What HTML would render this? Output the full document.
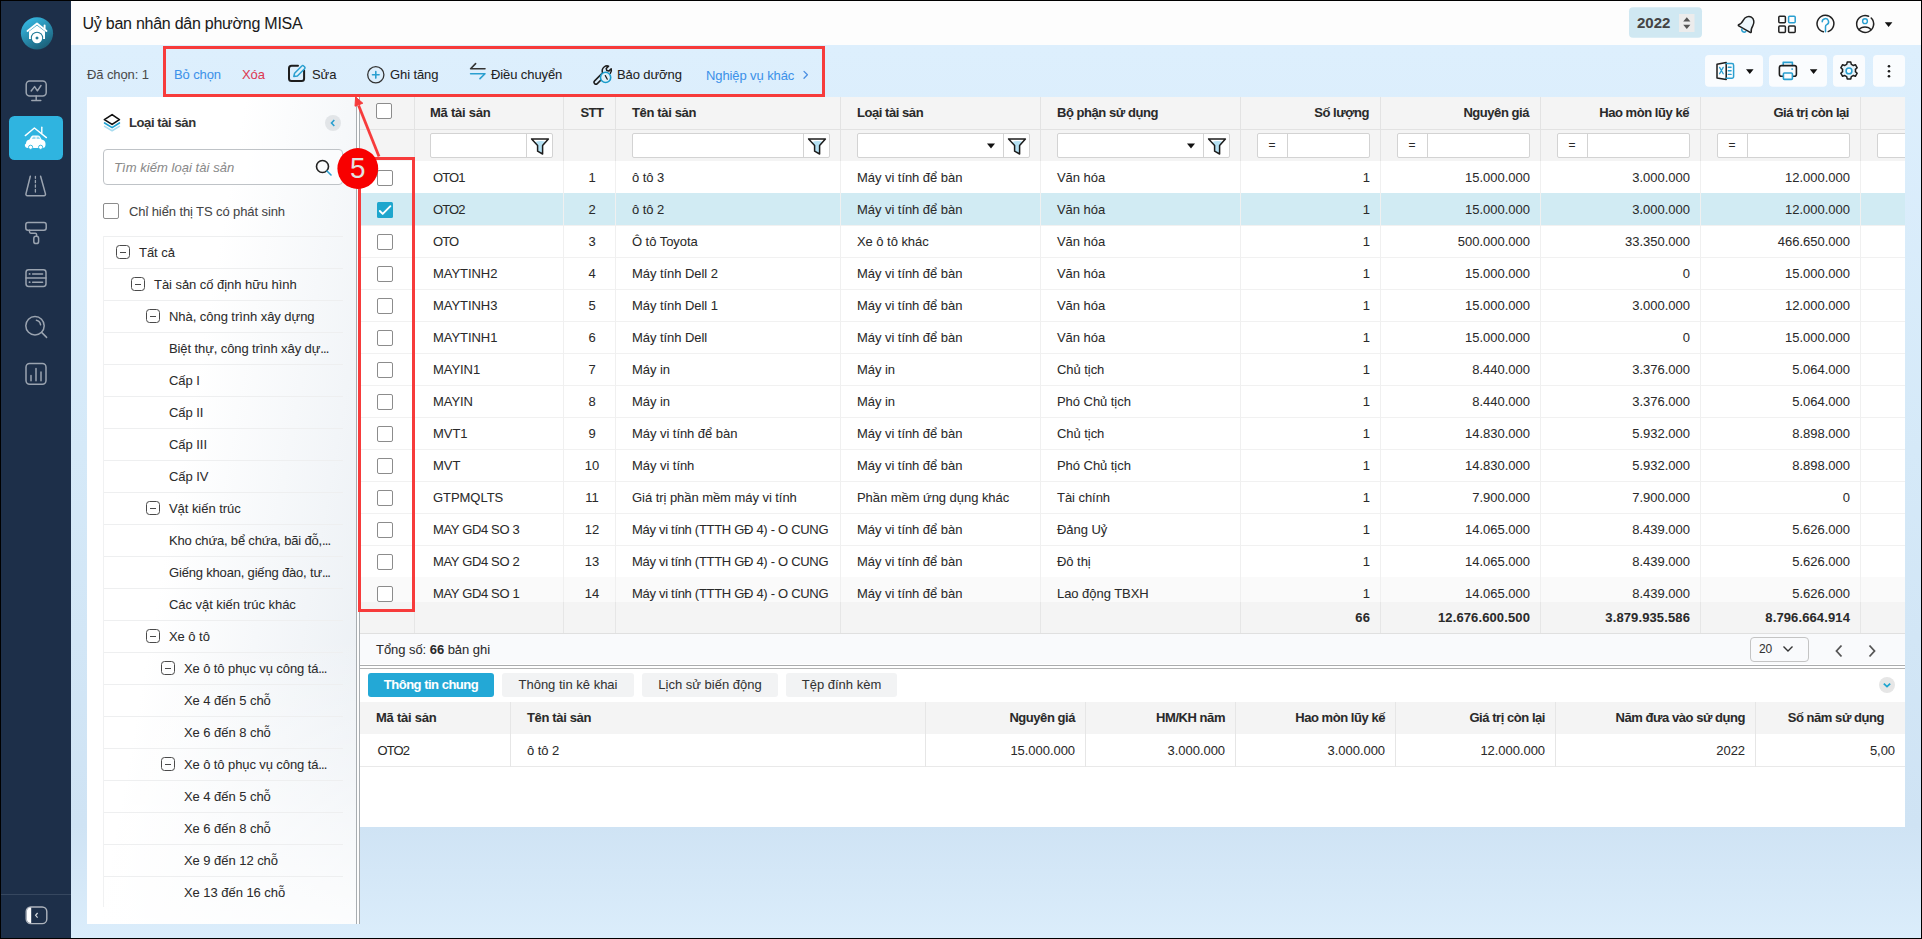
<!DOCTYPE html><html><head><meta charset="utf-8"><style>
*{box-sizing:border-box;margin:0;padding:0}
html,body{width:1922px;height:939px;overflow:hidden;background:#000}
body{position:relative;font-family:"Liberation Sans",sans-serif;color:#2a2a2a;font-size:13px}
.a{position:absolute}
.t{position:absolute;white-space:nowrap;letter-spacing:-0.05px;line-height:16px;-webkit-text-stroke:0.05px currentColor}
#app{position:absolute;left:1px;top:1px;width:1920px;height:937px;overflow:hidden;background:linear-gradient(to bottom,#ddeffd 5%,#d5e9f8 48%,#cfe3f4 88%,#dbedfb 100%)}
#side{position:absolute;left:0;top:0;width:70px;height:937px;background:#1d2f49}
#hdr{position:absolute;left:70px;top:0;width:1850px;height:44px;background:#fdfdfd}
#panel{position:absolute;left:86px;top:96px;width:270px;height:827px;background:linear-gradient(to bottom,rgba(255,255,255,0) 65%,rgba(255,255,255,0.85) 100%),linear-gradient(100deg,#ffffff 38%,#e9eef3 100%)}
#tbl{position:absolute;left:359px;top:96px;width:1545px;height:568px;background:#fff;overflow:hidden}
.cell{position:absolute;top:0;height:32px}
.hd{background:#f4f4f4}
.vl{position:absolute;top:0;width:1px;background:#e6e6e6}
.hl{position:absolute;left:0;height:1px;background:#e9e9e9}
.cb{position:absolute;width:16px;height:16px;border:1px solid #8c8c8c;border-radius:2px;background:#fff}
.inp{position:absolute;height:25px;border:1px solid #d3d3d3;background:#fff;border-radius:2px}
.t.b{font-weight:bold;letter-spacing:-0.45px}
</style></head><body><div id="app">
<div id="side">
<svg class="a" style="left:0;top:0" width="70" height="420" viewBox="1 1 70 420">
<defs><linearGradient id="lg" x1="0.2" y1="0" x2="0.8" y2="1"><stop offset="0" stop-color="#36bbe6"/><stop offset="1" stop-color="#1a5a72"/></linearGradient></defs>
<circle cx="37" cy="33.3" r="16.1" fill="url(#lg)"/>
<path d="M27.5 31 L37 23.5 L46.5 31" fill="none" stroke="#fff" stroke-width="1.9" stroke-linecap="round" stroke-linejoin="round"/>
<path d="M44.6 25.5 v3.5" stroke="#fff" stroke-width="1.9" stroke-linecap="round"/>
<path d="M29 31.5 L37 25.6 L45 31.5 V39 H29z" fill="#fff"/>
<circle cx="37" cy="38" r="6.2" fill="#1f7896"/><circle cx="37" cy="38" r="5.2" fill="#fff"/>
<path d="M37 36.2 L38.8 38 L37 39.8 L35.2 38z" fill="#1f7896"/>

<g fill="none" stroke="#9ba4b0" stroke-width="1.5" stroke-linecap="round" stroke-linejoin="round"><rect x="26.2" y="81" width="20" height="15" rx="3.5"/><path d="M36.2 96v4.2M31.8 100.5h9"/><path d="M31.2 91 L34.6 86.6 L37.4 90.8 L41 85.5"/></g>
<rect x="9" y="116" width="54" height="44" rx="5.5" fill="#2fb4e0"/>
<path d="M25.3 135.6 L34.4 128 L46.4 137.6" fill="none" stroke="#fff" stroke-width="1.4" stroke-linecap="round" stroke-linejoin="round"/>
<path d="M41.8 127.2 v6" stroke="#fff" stroke-width="1.4" stroke-linecap="round"/>
<path d="M26 143.5 c0-2.2 1.3-3.5 3.5-3.9 l1.6-2.8 c.6-.9 1.3-1.2 2.4-1.2 h4.3 c1 0 1.8 .4 2.3 1.2 l1.5 2.8 c2.2 .4 3.9 1.8 3.9 4 v1.2 c0 2-1 3.3-3 3.3 h-14.6 c-1.9 0-3.1-1.3-3.1-3.3z" fill="#fff"/>
<path d="M31.8 139 l1.2-2.3 h2.5 v2.3z M36.6 136.7 h2.3 l1.2 2.3 h-3.5z" fill="#9bdcf1"/>
<circle cx="30.6" cy="147.3" r="2.1" fill="#fff" stroke="#2fb4e0" stroke-width="0.9"/><circle cx="40.6" cy="147.3" r="2.1" fill="#fff" stroke="#2fb4e0" stroke-width="0.9"/>
<g fill="none" stroke="#9ba4b0" stroke-width="1.5" stroke-linecap="round" stroke-linejoin="round"><path d="M30.3 176.2 L26 193.6 c-.3 1.2 .3 2.2 1.4 2.2 H44 c1.1 0 1.7-1 1.4-2.2 L40.6 176.2"/><path d="M35.4 176.5v1.8M35.4 180.5v2.2M35.4 185v2.2M35.4 189.5v2.5" stroke-width="1.3"/></g>
<g fill="none" stroke="#9ba4b0" stroke-width="1.5" stroke-linecap="round" stroke-linejoin="round"><rect x="25.8" y="222.6" width="20.4" height="7.6" rx="2.2"/><path d="M29.5 230.3 v1.5 c0 .9 .5 1.4 1.4 1.4 h4.4 c.9 0 1.3 .5 1.3 1.3 v1.5"/><rect x="33.8" y="236.2" width="4.8" height="7.4" rx="2.2"/></g>
<g fill="none" stroke="#9ba4b0" stroke-width="1.5" stroke-linecap="round" stroke-linejoin="round"><rect x="26" y="269.8" width="20" height="16.6" rx="2.6"/><path d="M26 278h20M32.6 273.9h10M32.6 282.2h10"/><path d="M29.5 273.9h.2M29.5 282.2h.2" stroke-width="1.8"/></g>
<g fill="none" stroke="#9ba4b0" stroke-width="1.5" stroke-linecap="round" stroke-linejoin="round"><circle cx="35" cy="325.8" r="9.2"/><path d="M41.6 332.4 L46.6 337.4"/><path d="M36.4 320.3 a5.6 5.6 0 0 1 4.2 4.5"/></g>
<g fill="none" stroke="#9ba4b0" stroke-width="1.5" stroke-linecap="round" stroke-linejoin="round"><rect x="26" y="363.6" width="20" height="20.6" rx="3.6"/><path d="M31 375.5v5.2M36 368.6v12.1M41 372v8.7"/></g>
</svg>
<div class="a" style="left:0;top:893px;width:70px;height:1px;background:#36475f"></div>
<svg class="a" style="left:23px;top:904px" width="25" height="21" viewBox="0 0 25 21">
<rect x="2.2" y="2" width="20.6" height="16.6" rx="4.6" fill="none" stroke="#aeb4bd" stroke-width="1.4"/><path d="M2.9 6.6 a4 4 0 0 1 4-4 h0.3 v15.4 h-0.3 a4 4 0 0 1 -4-4z" fill="#fff"/>
<path d="M13.6 8 L11.6 10.3 L13.6 12.6" fill="none" stroke="#d5d9de" stroke-width="1.2"/></svg>
</div>
<div id="hdr">
<div class="t" style="left:11.5px;top:14px;font-size:16px;line-height:18px;letter-spacing:-0.25px;color:#1a1a1a">Uỷ ban nhân dân phường MISA</div>
</div>
<svg class="a" style="left:0;top:0" width="1920" height="96" viewBox="1 1 1920 96">
<rect x="1629" y="7.2" width="73" height="30.6" rx="4" fill="#d0e8f2"/>
<rect x="1679" y="14" width="15.5" height="18" fill="#ececec"/>
<path d="M1683.2 21.5 L1686.8 17.3 L1690.4 21.5z M1683.2 24.8 L1686.8 29 L1690.4 24.8z" fill="#555"/>
<g fill="none" stroke-linecap="round" stroke-linejoin="round" stroke-width="1.5">
 <g transform="translate(1.3 0) rotate(30 1746 24)">
  <path d="M1739 28.5 c1.6-1.4 1.6-3.5 1.6-6 c0-3.4 2.3-6.4 5.5-6.4 s5.5 3 5.5 6.4 c0 2.5 0 4.6 1.6 6 c.6.6 .2 1.4-.5 1.4 h-13.2 c-.7 0-1.1-.8-.5-1.4z" stroke="#1f1f1f" fill="#eef7fc"/>
  <path d="M1743.8 31.2 a2.4 2.4 0 0 0 4.6 0" stroke="#2a9fd0"/>
 </g>
 <rect x="1778.8" y="16.2" width="6.6" height="6.6" rx="1" stroke="#222"/>
 <rect x="1788.6" y="16.2" width="6.6" height="6.6" rx="1" stroke="#2a9fd0"/>
 <rect x="1778.8" y="26" width="6.6" height="6.6" rx="1" stroke="#222"/>
 <rect x="1788.6" y="26" width="6.6" height="6.6" rx="1" stroke="#222"/>
 <path d="M1823.4 31.8 A8.4 8.4 0 1 1 1828.2 31.6" stroke="#222"/>
 <path d="M1822.2 21.8 a3.2 3.2 0 1 1 4.6 2.9 c-.9 .45 -1.3 1.2 -1.3 2.1 v5" stroke="#2a9fd0"/>
 <path d="M1868.6 16.2 A8.5 8.5 0 1 0 1871.2 18" stroke="#222"/>
 <circle cx="1865" cy="21.2" r="2.4" stroke="#2a9fd0" stroke-width="1.4"/>
 <path d="M1859 29.6 c2.8-3.6 9.2-3.6 12 0" stroke="#222"/>
</g>
<path d="M1884.8 22.3 h7.6 L1888.6 27z" fill="#111"/>
</svg>
<div class="t b" style="left:1636px;top:14px;font-size:15px;line-height:16px;color:#444;letter-spacing:0">2022</div>
<div class="t" style="left:86px;top:66px;color:#4a4a4a;letter-spacing:-0.1px">Đã chọn: 1</div>
<div class="t" style="left:173px;top:66px;color:#3d92ea;letter-spacing:-0.1px">Bỏ chọn</div>
<div class="t" style="left:241px;top:66px;color:#dc3a52;letter-spacing:-0.1px">Xóa</div>
<div class="t" style="left:311px;top:66px;color:#222;letter-spacing:-0.1px">Sửa</div>
<div class="t" style="left:389px;top:66px;color:#222;letter-spacing:-0.1px">Ghi tăng</div>
<div class="t" style="left:490px;top:66px;color:#222;letter-spacing:-0.1px">Điều chuyển</div>
<div class="t" style="left:616px;top:66px;color:#222;letter-spacing:-0.1px">Bảo dưỡng</div>
<div class="t" style="left:705px;top:67px;color:#3d92ea;letter-spacing:-0.1px">Nghiệp vụ khác</div>
<svg class="a" style="left:0;top:0" width="1920" height="96" viewBox="1 1 1920 96">
<g fill="none" stroke-linecap="round" stroke-linejoin="round">
 <path d="M298 65.8 H291.5 a2.5 2.5 0 0 0 -2.5 2.5 V78.6 a2.5 2.5 0 0 0 2.5 2.5 H301.6 a2.5 2.5 0 0 0 2.5-2.5 V70.5" stroke="#1d1d1d" stroke-width="2"/>
 <path d="M293.8 76.4 L294.6 73.2 L301.8 66 a1.3 1.3 0 0 1 1.9 0 L304.6 66.9 a1.3 1.3 0 0 1 0 1.9 L297.4 76 z" stroke="#2a9fd0" stroke-width="1.5" fill="#e3f2fa"/>
 <circle cx="375.8" cy="74.8" r="8.1" stroke="#333" stroke-width="1.3"/>
 <path d="M375.8 71.5v6.6M372.5 74.8h6.6" stroke="#2a9fd0" stroke-width="1.6"/>
 <path d="M485 68.7 H470.6 L475.6 63.6" stroke="#333" stroke-width="1.6"/>
 <path d="M470.6 73.7 H485 L480 78.6" stroke="#2a9fd0" stroke-width="1.6"/>
 <g transform="translate(0.3 1.6)"><path d="M605 74 L597 82 a1.9 1.9 0 0 1 -2.7 -2.7 L602.3 71.3 c-.8-2.2-.2-4.5 1.5-5.9 c1.3-1 3-1.4 4.5-.9 l-2.4 2.4 l.6 2 l2 .6 l2.4-2.4 c.5 1.5 .1 3.2-.9 4.5" stroke="#1d1d1d" stroke-width="1.5"/></g>
 <circle cx="605.6" cy="77.4" r="5.1" stroke="#1a9ccb" stroke-width="1.6" fill="#dff0f9"/>
 <path d="M605.3 75.6 L607.3 79.2" stroke="#1d1d1d" stroke-width="1.2"/>
 <path d="M804 71.4 L807.4 74.8 L804 78.2" stroke="#4a8fe3" stroke-width="1.3"/>
</g>
<g fill="#fafcfe">
 <rect x="1705" y="55" width="58" height="31.8" rx="4"/><rect x="1769" y="55" width="58" height="31.8" rx="4"/>
 <rect x="1833" y="55" width="32" height="31.8" rx="4"/><rect x="1873" y="55" width="32" height="31.8" rx="4"/>
</g>
<g fill="none" stroke-linejoin="round" stroke-linecap="round">
 <path d="M1717 64.2 L1726.2 62.5 V79.6 L1717 77.9z" stroke="#1d1d1d" stroke-width="1.5"/>
 <path d="M1726.2 63.6 H1732 a1.6 1.6 0 0 1 1.6 1.6 V76.6 a1.6 1.6 0 0 1 -1.6 1.6 H1726.2" stroke="#2a9fd0" stroke-width="1.5"/>
 <path d="M1728.3 67.2h2.8M1728.3 70.8h2.8M1728.3 74.4h2.8" stroke="#2a9fd0" stroke-width="1.4"/>
 <path d="M1719.6 67.4 l3.6 6.4 M1723.2 67.4 l-3.6 6.4" stroke="#2a9fd0" stroke-width="1.3"/>
 <path d="M1783.2 65.5 V62.4 h9.2 v3.1" stroke="#2a9fd0" stroke-width="1.6"/>
 <path d="M1783 76.2 h-1.6 a2 2 0 0 1 -2-2 V67.6 a2 2 0 0 1 2-2 h13 a2 2 0 0 1 2 2 v6.6 a2 2 0 0 1 -2 2 h-1.6" stroke="#1d1d1d" stroke-width="1.6"/>
 <rect x="1783.4" y="73" width="9" height="6.4" rx="1" stroke="#2a9fd0" stroke-width="1.6" fill="#fafcfe"/>
 <path d="M1792 69.1h.3" stroke="#2a9fd0" stroke-width="1.6"/>
</g>
<path d="M1746 69.2 h7.6 L1749.8 74z M1809.8 69.2 h7.6 L1813.6 74z" fill="#111"/>
<g transform="translate(1849 70.9)">
 <path d="M-1.8 -8.8 h3.6 l.5 2.3 a6.6 6.6 0 0 1 1.9 1.1 l2.2-.8 1.8 3.1-1.8 1.6 a6.6 6.6 0 0 1 0 2.2 l1.8 1.6-1.8 3.1-2.2-.8 a6.6 6.6 0 0 1-1.9 1.1 l-.5 2.3 h-3.6 l-.5-2.3 a6.6 6.6 0 0 1-1.9-1.1 l-2.2 .8-1.8-3.1 1.8-1.6 a6.6 6.6 0 0 1 0-2.2 l-1.8-1.6 1.8-3.1 2.2 .8 a6.6 6.6 0 0 1 1.9-1.1z" fill="#e8f4fa" stroke="#1d1d1d" stroke-width="1.5" stroke-linejoin="round"/>
 <circle r="2.9" fill="#fff" stroke="#2a9fd0" stroke-width="1.5"/>
</g>
<circle cx="1889" cy="66.2" r="1.3" fill="#1d1d1d"/><circle cx="1889" cy="71.2" r="1.3" fill="#1d1d1d"/><circle cx="1889" cy="76.2" r="1.3" fill="#1d1d1d"/>
</svg>
<div id="panel">
<svg class="a" style="left:0;top:0" width="270" height="60" viewBox="87 97 270 60" fill="none" stroke-linejoin="round" stroke-linecap="round">
<path d="M104.6 126.4 L112.1 130.8 L119.4 126.4" stroke="#a9dcef" stroke-width="1.6"/>
<path d="M104.6 123 L112.1 127.6 L119.4 123" stroke="#1d9fcf" stroke-width="1.7"/>
<path d="M104.4 119.6 L112.1 114.6 L119.4 119.6 L112.1 124.4z" stroke="#111" stroke-width="1.7" fill="#fff"/>
</svg>
<div class="t b" style="left:42px;top:18px;color:#333;letter-spacing:-0.4px">Loại tài sản</div>
<div class="a" style="left:238px;top:18px;width:16px;height:16px;border-radius:50%;background:#e2e5e8"></div>
<svg class="a" style="left:238px;top:18px" width="16" height="16" viewBox="0 0 16 16"><path d="M9.3 5 L6.5 8 L9.3 11" fill="none" stroke="#2a9fd0" stroke-width="1.6"/></svg>
<div class="a" style="left:16px;top:52px;width:240px;height:36px;border:1px solid #bfc3c7;border-radius:4px;background:rgba(255,255,255,0.5)"></div>
<div class="t" style="left:27px;top:63px;font-style:italic;color:#8a8a8a;letter-spacing:0.05px">Tìm kiếm loại tài sản</div>
<svg class="a" style="left:228px;top:62px" width="18" height="18" viewBox="0 0 18 18" fill="none" stroke-width="1.6" stroke-linecap="round">
<circle cx="7.5" cy="7.5" r="6" stroke="#222"/><path d="M12 12 L16 16" stroke="#2a9fd0"/></svg>
<div class="cb" style="left:16px;top:106px"></div>
<div class="t" style="left:42px;top:107px;color:#444;letter-spacing:-0.1px">Chỉ hiển thị TS có phát sinh</div>
<div class="a" style="left:16px;top:139px;width:240px;height:1px;background:#eeeff0"></div>
<div class="a" style="left:29px;top:148px;width:14px;height:14px;border:1.3px solid #4a4a4a;border-radius:3.5px"></div><div class="a" style="left:33px;top:154.5px;width:6px;height:1.2px;background:#4a4a4a"></div>
<div class="t" style="left:52px;top:148px;color:#2b2b2b;letter-spacing:-0.05px">Tất cả</div>
<div class="a" style="left:16px;top:171px;width:240px;height:1px;background:#eeeff0"></div>
<div class="a" style="left:44px;top:180px;width:14px;height:14px;border:1.3px solid #4a4a4a;border-radius:3.5px"></div><div class="a" style="left:48px;top:186.5px;width:6px;height:1.2px;background:#4a4a4a"></div>
<div class="t" style="left:67px;top:180px;color:#2b2b2b;letter-spacing:-0.05px">Tài sản cố định hữu hình</div>
<div class="a" style="left:16px;top:203px;width:240px;height:1px;background:#eeeff0"></div>
<div class="a" style="left:59px;top:212px;width:14px;height:14px;border:1.3px solid #4a4a4a;border-radius:3.5px"></div><div class="a" style="left:63px;top:218.5px;width:6px;height:1.2px;background:#4a4a4a"></div>
<div class="t" style="left:82px;top:212px;color:#2b2b2b;letter-spacing:-0.05px">Nhà, công trình xây dựng</div>
<div class="a" style="left:16px;top:235px;width:240px;height:1px;background:#eeeff0"></div>
<div class="t" style="left:82px;top:244px;color:#2b2b2b;letter-spacing:-0.1px">Biệt thự, công trình xây dự<span style="letter-spacing:-0.9px">...</span></div>
<div class="a" style="left:16px;top:267px;width:240px;height:1px;background:#eeeff0"></div>
<div class="t" style="left:82px;top:276px;color:#2b2b2b;letter-spacing:-0.05px">Cấp I</div>
<div class="a" style="left:16px;top:299px;width:240px;height:1px;background:#eeeff0"></div>
<div class="t" style="left:82px;top:308px;color:#2b2b2b;letter-spacing:-0.05px">Cấp II</div>
<div class="a" style="left:16px;top:331px;width:240px;height:1px;background:#eeeff0"></div>
<div class="t" style="left:82px;top:340px;color:#2b2b2b;letter-spacing:-0.05px">Cấp III</div>
<div class="a" style="left:16px;top:363px;width:240px;height:1px;background:#eeeff0"></div>
<div class="t" style="left:82px;top:372px;color:#2b2b2b;letter-spacing:-0.05px">Cấp IV</div>
<div class="a" style="left:16px;top:395px;width:240px;height:1px;background:#eeeff0"></div>
<div class="a" style="left:59px;top:404px;width:14px;height:14px;border:1.3px solid #4a4a4a;border-radius:3.5px"></div><div class="a" style="left:63px;top:410.5px;width:6px;height:1.2px;background:#4a4a4a"></div>
<div class="t" style="left:82px;top:404px;color:#2b2b2b;letter-spacing:-0.05px">Vật kiến trúc</div>
<div class="a" style="left:16px;top:427px;width:240px;height:1px;background:#eeeff0"></div>
<div class="t" style="left:82px;top:436px;color:#2b2b2b;letter-spacing:-0.18px">Kho chứa, bể chứa, bãi đỗ,<span style="letter-spacing:-0.9px">...</span></div>
<div class="a" style="left:16px;top:459px;width:240px;height:1px;background:#eeeff0"></div>
<div class="t" style="left:82px;top:468px;color:#2b2b2b;letter-spacing:-0.18px">Giếng khoan, giếng đào, tư<span style="letter-spacing:-0.9px">...</span></div>
<div class="a" style="left:16px;top:491px;width:240px;height:1px;background:#eeeff0"></div>
<div class="t" style="left:82px;top:500px;color:#2b2b2b;letter-spacing:-0.05px">Các vật kiến trúc khác</div>
<div class="a" style="left:16px;top:523px;width:240px;height:1px;background:#eeeff0"></div>
<div class="a" style="left:59px;top:532px;width:14px;height:14px;border:1.3px solid #4a4a4a;border-radius:3.5px"></div><div class="a" style="left:63px;top:538.5px;width:6px;height:1.2px;background:#4a4a4a"></div>
<div class="t" style="left:82px;top:532px;color:#2b2b2b;letter-spacing:-0.05px">Xe ô tô</div>
<div class="a" style="left:16px;top:555px;width:240px;height:1px;background:#eeeff0"></div>
<div class="a" style="left:74px;top:564px;width:14px;height:14px;border:1.3px solid #4a4a4a;border-radius:3.5px"></div><div class="a" style="left:78px;top:570.5px;width:6px;height:1.2px;background:#4a4a4a"></div>
<div class="t" style="left:97px;top:564px;color:#2b2b2b;letter-spacing:-0.1px">Xe ô tô phục vụ công tá<span style="letter-spacing:-0.9px">...</span></div>
<div class="a" style="left:16px;top:587px;width:240px;height:1px;background:#eeeff0"></div>
<div class="t" style="left:97px;top:596px;color:#2b2b2b;letter-spacing:-0.05px">Xe 4 đến 5 chỗ</div>
<div class="a" style="left:16px;top:619px;width:240px;height:1px;background:#eeeff0"></div>
<div class="t" style="left:97px;top:628px;color:#2b2b2b;letter-spacing:-0.05px">Xe 6 đến 8 chỗ</div>
<div class="a" style="left:16px;top:651px;width:240px;height:1px;background:#eeeff0"></div>
<div class="a" style="left:74px;top:660px;width:14px;height:14px;border:1.3px solid #4a4a4a;border-radius:3.5px"></div><div class="a" style="left:78px;top:666.5px;width:6px;height:1.2px;background:#4a4a4a"></div>
<div class="t" style="left:97px;top:660px;color:#2b2b2b;letter-spacing:-0.1px">Xe ô tô phục vụ công tá<span style="letter-spacing:-0.9px">...</span></div>
<div class="a" style="left:16px;top:683px;width:240px;height:1px;background:#eeeff0"></div>
<div class="t" style="left:97px;top:692px;color:#2b2b2b;letter-spacing:-0.05px">Xe 4 đến 5 chỗ</div>
<div class="a" style="left:16px;top:715px;width:240px;height:1px;background:#eeeff0"></div>
<div class="t" style="left:97px;top:724px;color:#2b2b2b;letter-spacing:-0.05px">Xe 6 đến 8 chỗ</div>
<div class="a" style="left:16px;top:747px;width:240px;height:1px;background:#eeeff0"></div>
<div class="t" style="left:97px;top:756px;color:#2b2b2b;letter-spacing:-0.05px">Xe 9 đến 12 chỗ</div>
<div class="a" style="left:16px;top:779px;width:240px;height:1px;background:#eeeff0"></div>
<div class="t" style="left:97px;top:788px;color:#2b2b2b;letter-spacing:-0.05px">Xe 13 đến 16 chỗ</div>
<div class="a" style="left:16px;top:139px;width:1px;height:671px;background:#f0f1f2"></div>
</div>
<div class="a" style="left:355px;top:96px;width:1px;height:827px;background:#a8adb1"></div>
<div class="a" style="left:356px;top:96px;width:2px;height:827px;background:#fdfdfd"></div>
<div class="a" style="left:358px;top:96px;width:1px;height:827px;background:#a8adb1"></div>
<div id="tbl">
<div class="a hd" style="left:0;top:0;width:1545px;height:64px"></div>
<div class="hl" style="top:32px;width:1545px;background:#e2e2e2"></div>
<div class="hl" style="top:96px;width:1545px;background:#f1f1f1"></div>
<div class="cb" style="left:17px;top:73px"></div>
<div class="t" style="left:73px;top:73px;letter-spacing:-0.9px">OTO1</div>
<div class="t" style="left:203px;width:58px;text-align:center;top:73px;letter-spacing:0">1</div>
<div class="t" style="left:272px;top:73px;letter-spacing:-0.05px">ô tô 3</div>
<div class="t" style="left:497px;top:73px;letter-spacing:-0.05px">Máy vi tính để bàn</div>
<div class="t" style="left:697px;top:73px;letter-spacing:-0.05px">Văn hóa</div>
<div class="t" style="right:535px;top:73px;letter-spacing:0">1</div>
<div class="t" style="right:375px;top:73px;letter-spacing:0">15.000.000</div>
<div class="t" style="right:215px;top:73px;letter-spacing:0">3.000.000</div>
<div class="t" style="right:55px;top:73px;letter-spacing:0">12.000.000</div>
<div class="a" style="left:0;top:96px;width:1545px;height:32px;background:#d1ebf3"></div>
<div class="hl" style="top:128px;width:1545px;background:#f1f1f1"></div>
<div class="a" style="left:17px;top:105px;width:16px;height:16px;background:#1ea6cd;border-radius:1.5px"></div><svg class="a" style="left:17px;top:105px" width="16" height="16" viewBox="0 0 16 16"><path d="M2.8 9 L5.7 11.9 L13.4 4.2" fill="none" stroke="#fff" stroke-width="1.9" stroke-linecap="round" stroke-linejoin="round"/></svg>
<div class="t" style="left:73px;top:105px;letter-spacing:-0.9px">OTO2</div>
<div class="t" style="left:203px;width:58px;text-align:center;top:105px;letter-spacing:0">2</div>
<div class="t" style="left:272px;top:105px;letter-spacing:-0.05px">ô tô 2</div>
<div class="t" style="left:497px;top:105px;letter-spacing:-0.05px">Máy vi tính để bàn</div>
<div class="t" style="left:697px;top:105px;letter-spacing:-0.05px">Văn hóa</div>
<div class="t" style="right:535px;top:105px;letter-spacing:0">1</div>
<div class="t" style="right:375px;top:105px;letter-spacing:0">15.000.000</div>
<div class="t" style="right:215px;top:105px;letter-spacing:0">3.000.000</div>
<div class="t" style="right:55px;top:105px;letter-spacing:0">12.000.000</div>
<div class="hl" style="top:160px;width:1545px;background:#f1f1f1"></div>
<div class="cb" style="left:17px;top:137px"></div>
<div class="t" style="left:73px;top:137px;letter-spacing:-0.9px">OTO</div>
<div class="t" style="left:203px;width:58px;text-align:center;top:137px;letter-spacing:0">3</div>
<div class="t" style="left:272px;top:137px;letter-spacing:-0.05px">Ô tô Toyota</div>
<div class="t" style="left:497px;top:137px;letter-spacing:-0.05px">Xe ô tô khác</div>
<div class="t" style="left:697px;top:137px;letter-spacing:-0.05px">Văn hóa</div>
<div class="t" style="right:535px;top:137px;letter-spacing:0">1</div>
<div class="t" style="right:375px;top:137px;letter-spacing:0">500.000.000</div>
<div class="t" style="right:215px;top:137px;letter-spacing:0">33.350.000</div>
<div class="t" style="right:55px;top:137px;letter-spacing:0">466.650.000</div>
<div class="hl" style="top:192px;width:1545px;background:#f1f1f1"></div>
<div class="cb" style="left:17px;top:169px"></div>
<div class="t" style="left:73px;top:169px;letter-spacing:-0.05px">MAYTINH2</div>
<div class="t" style="left:203px;width:58px;text-align:center;top:169px;letter-spacing:0">4</div>
<div class="t" style="left:272px;top:169px;letter-spacing:-0.05px">Máy tính Dell 2</div>
<div class="t" style="left:497px;top:169px;letter-spacing:-0.05px">Máy vi tính để bàn</div>
<div class="t" style="left:697px;top:169px;letter-spacing:-0.05px">Văn hóa</div>
<div class="t" style="right:535px;top:169px;letter-spacing:0">1</div>
<div class="t" style="right:375px;top:169px;letter-spacing:0">15.000.000</div>
<div class="t" style="right:215px;top:169px;letter-spacing:0">0</div>
<div class="t" style="right:55px;top:169px;letter-spacing:0">15.000.000</div>
<div class="hl" style="top:224px;width:1545px;background:#f1f1f1"></div>
<div class="cb" style="left:17px;top:201px"></div>
<div class="t" style="left:73px;top:201px;letter-spacing:-0.05px">MAYTINH3</div>
<div class="t" style="left:203px;width:58px;text-align:center;top:201px;letter-spacing:0">5</div>
<div class="t" style="left:272px;top:201px;letter-spacing:-0.05px">Máy tính Dell 1</div>
<div class="t" style="left:497px;top:201px;letter-spacing:-0.05px">Máy vi tính để bàn</div>
<div class="t" style="left:697px;top:201px;letter-spacing:-0.05px">Văn hóa</div>
<div class="t" style="right:535px;top:201px;letter-spacing:0">1</div>
<div class="t" style="right:375px;top:201px;letter-spacing:0">15.000.000</div>
<div class="t" style="right:215px;top:201px;letter-spacing:0">3.000.000</div>
<div class="t" style="right:55px;top:201px;letter-spacing:0">12.000.000</div>
<div class="hl" style="top:256px;width:1545px;background:#f1f1f1"></div>
<div class="cb" style="left:17px;top:233px"></div>
<div class="t" style="left:73px;top:233px;letter-spacing:-0.05px">MAYTINH1</div>
<div class="t" style="left:203px;width:58px;text-align:center;top:233px;letter-spacing:0">6</div>
<div class="t" style="left:272px;top:233px;letter-spacing:-0.05px">Máy tính Dell</div>
<div class="t" style="left:497px;top:233px;letter-spacing:-0.05px">Máy vi tính để bàn</div>
<div class="t" style="left:697px;top:233px;letter-spacing:-0.05px">Văn hóa</div>
<div class="t" style="right:535px;top:233px;letter-spacing:0">1</div>
<div class="t" style="right:375px;top:233px;letter-spacing:0">15.000.000</div>
<div class="t" style="right:215px;top:233px;letter-spacing:0">0</div>
<div class="t" style="right:55px;top:233px;letter-spacing:0">15.000.000</div>
<div class="hl" style="top:288px;width:1545px;background:#f1f1f1"></div>
<div class="cb" style="left:17px;top:265px"></div>
<div class="t" style="left:73px;top:265px;letter-spacing:-0.05px">MAYIN1</div>
<div class="t" style="left:203px;width:58px;text-align:center;top:265px;letter-spacing:0">7</div>
<div class="t" style="left:272px;top:265px;letter-spacing:-0.05px">Máy in</div>
<div class="t" style="left:497px;top:265px;letter-spacing:-0.05px">Máy in</div>
<div class="t" style="left:697px;top:265px;letter-spacing:-0.05px">Chủ tịch</div>
<div class="t" style="right:535px;top:265px;letter-spacing:0">1</div>
<div class="t" style="right:375px;top:265px;letter-spacing:0">8.440.000</div>
<div class="t" style="right:215px;top:265px;letter-spacing:0">3.376.000</div>
<div class="t" style="right:55px;top:265px;letter-spacing:0">5.064.000</div>
<div class="hl" style="top:320px;width:1545px;background:#f1f1f1"></div>
<div class="cb" style="left:17px;top:297px"></div>
<div class="t" style="left:73px;top:297px;letter-spacing:-0.05px">MAYIN</div>
<div class="t" style="left:203px;width:58px;text-align:center;top:297px;letter-spacing:0">8</div>
<div class="t" style="left:272px;top:297px;letter-spacing:-0.05px">Máy in</div>
<div class="t" style="left:497px;top:297px;letter-spacing:-0.05px">Máy in</div>
<div class="t" style="left:697px;top:297px;letter-spacing:-0.05px">Phó Chủ tịch</div>
<div class="t" style="right:535px;top:297px;letter-spacing:0">1</div>
<div class="t" style="right:375px;top:297px;letter-spacing:0">8.440.000</div>
<div class="t" style="right:215px;top:297px;letter-spacing:0">3.376.000</div>
<div class="t" style="right:55px;top:297px;letter-spacing:0">5.064.000</div>
<div class="hl" style="top:352px;width:1545px;background:#f1f1f1"></div>
<div class="cb" style="left:17px;top:329px"></div>
<div class="t" style="left:73px;top:329px;letter-spacing:-0.05px">MVT1</div>
<div class="t" style="left:203px;width:58px;text-align:center;top:329px;letter-spacing:0">9</div>
<div class="t" style="left:272px;top:329px;letter-spacing:-0.05px">Máy vi tính để bàn</div>
<div class="t" style="left:497px;top:329px;letter-spacing:-0.05px">Máy vi tính để bàn</div>
<div class="t" style="left:697px;top:329px;letter-spacing:-0.05px">Chủ tịch</div>
<div class="t" style="right:535px;top:329px;letter-spacing:0">1</div>
<div class="t" style="right:375px;top:329px;letter-spacing:0">14.830.000</div>
<div class="t" style="right:215px;top:329px;letter-spacing:0">5.932.000</div>
<div class="t" style="right:55px;top:329px;letter-spacing:0">8.898.000</div>
<div class="hl" style="top:384px;width:1545px;background:#f1f1f1"></div>
<div class="cb" style="left:17px;top:361px"></div>
<div class="t" style="left:73px;top:361px;letter-spacing:-0.05px">MVT</div>
<div class="t" style="left:203px;width:58px;text-align:center;top:361px;letter-spacing:0">10</div>
<div class="t" style="left:272px;top:361px;letter-spacing:-0.05px">Máy vi tính</div>
<div class="t" style="left:497px;top:361px;letter-spacing:-0.05px">Máy vi tính để bàn</div>
<div class="t" style="left:697px;top:361px;letter-spacing:-0.05px">Phó Chủ tịch</div>
<div class="t" style="right:535px;top:361px;letter-spacing:0">1</div>
<div class="t" style="right:375px;top:361px;letter-spacing:0">14.830.000</div>
<div class="t" style="right:215px;top:361px;letter-spacing:0">5.932.000</div>
<div class="t" style="right:55px;top:361px;letter-spacing:0">8.898.000</div>
<div class="hl" style="top:416px;width:1545px;background:#f1f1f1"></div>
<div class="cb" style="left:17px;top:393px"></div>
<div class="t" style="left:73px;top:393px;letter-spacing:-0.05px">GTPMQLTS</div>
<div class="t" style="left:203px;width:58px;text-align:center;top:393px;letter-spacing:0">11</div>
<div class="t" style="left:272px;top:393px;letter-spacing:-0.05px">Giá trị phần mềm máy vi tính</div>
<div class="t" style="left:497px;top:393px;letter-spacing:-0.05px">Phần mềm ứng dụng khác</div>
<div class="t" style="left:697px;top:393px;letter-spacing:-0.05px">Tài chính</div>
<div class="t" style="right:535px;top:393px;letter-spacing:0">1</div>
<div class="t" style="right:375px;top:393px;letter-spacing:0">7.900.000</div>
<div class="t" style="right:215px;top:393px;letter-spacing:0">7.900.000</div>
<div class="t" style="right:55px;top:393px;letter-spacing:0">0</div>
<div class="hl" style="top:448px;width:1545px;background:#f1f1f1"></div>
<div class="cb" style="left:17px;top:425px"></div>
<div class="t" style="left:73px;top:425px;letter-spacing:-0.35px">MAY GD4 SO 3</div>
<div class="t" style="left:203px;width:58px;text-align:center;top:425px;letter-spacing:0">12</div>
<div class="t" style="left:272px;top:425px;letter-spacing:-0.3px">Máy vi tính (TTTH GĐ 4) - O CUNG</div>
<div class="t" style="left:497px;top:425px;letter-spacing:-0.05px">Máy vi tính để bàn</div>
<div class="t" style="left:697px;top:425px;letter-spacing:-0.05px">Đảng Uỷ</div>
<div class="t" style="right:535px;top:425px;letter-spacing:0">1</div>
<div class="t" style="right:375px;top:425px;letter-spacing:0">14.065.000</div>
<div class="t" style="right:215px;top:425px;letter-spacing:0">8.439.000</div>
<div class="t" style="right:55px;top:425px;letter-spacing:0">5.626.000</div>
<div class="hl" style="top:480px;width:1545px;background:#f1f1f1"></div>
<div class="cb" style="left:17px;top:457px"></div>
<div class="t" style="left:73px;top:457px;letter-spacing:-0.35px">MAY GD4 SO 2</div>
<div class="t" style="left:203px;width:58px;text-align:center;top:457px;letter-spacing:0">13</div>
<div class="t" style="left:272px;top:457px;letter-spacing:-0.3px">Máy vi tính (TTTH GĐ 4) - O CUNG</div>
<div class="t" style="left:497px;top:457px;letter-spacing:-0.05px">Máy vi tính để bàn</div>
<div class="t" style="left:697px;top:457px;letter-spacing:-0.05px">Đô thị</div>
<div class="t" style="right:535px;top:457px;letter-spacing:0">1</div>
<div class="t" style="right:375px;top:457px;letter-spacing:0">14.065.000</div>
<div class="t" style="right:215px;top:457px;letter-spacing:0">8.439.000</div>
<div class="t" style="right:55px;top:457px;letter-spacing:0">5.626.000</div>
<div class="a" style="left:0;top:480px;width:1545px;height:32px;background:#fafafa"></div>
<div class="hl" style="top:512px;width:1545px;background:#f1f1f1"></div>
<div class="cb" style="left:17px;top:489px"></div>
<div class="t" style="left:73px;top:489px;letter-spacing:-0.35px">MAY GD4 SO 1</div>
<div class="t" style="left:203px;width:58px;text-align:center;top:489px;letter-spacing:0">14</div>
<div class="t" style="left:272px;top:489px;letter-spacing:-0.3px">Máy vi tính (TTTH GĐ 4) - O CUNG</div>
<div class="t" style="left:497px;top:489px;letter-spacing:-0.05px">Máy vi tính để bàn</div>
<div class="t" style="left:697px;top:489px;letter-spacing:-0.05px">Lao động TBXH</div>
<div class="t" style="right:535px;top:489px;letter-spacing:0">1</div>
<div class="t" style="right:375px;top:489px;letter-spacing:0">14.065.000</div>
<div class="t" style="right:215px;top:489px;letter-spacing:0">8.439.000</div>
<div class="t" style="right:55px;top:489px;letter-spacing:0">5.626.000</div>
<div class="a hd" style="left:0;top:505px;width:1545px;height:32px"></div>
<div class="t b" style="right:535px;top:513px;letter-spacing:0.12px">66</div>
<div class="t b" style="right:375px;top:513px;letter-spacing:0.12px">12.676.600.500</div>
<div class="t b" style="right:215px;top:513px;letter-spacing:0.12px">3.879.935.586</div>
<div class="t b" style="right:55px;top:513px;letter-spacing:0.12px">8.796.664.914</div>
<div class="vl" style="left:54px;height:64px;background:#e3e3e3"></div><div class="vl" style="left:54px;top:64px;height:441px;background:#f0f0f0"></div><div class="vl" style="left:54px;top:505px;height:31px;background:#e6e6e6"></div>
<div class="vl" style="left:203px;height:64px;background:#e3e3e3"></div><div class="vl" style="left:203px;top:64px;height:441px;background:#f0f0f0"></div><div class="vl" style="left:203px;top:505px;height:31px;background:#e6e6e6"></div>
<div class="vl" style="left:255px;height:64px;background:#e3e3e3"></div><div class="vl" style="left:255px;top:64px;height:441px;background:#f0f0f0"></div><div class="vl" style="left:255px;top:505px;height:31px;background:#e6e6e6"></div>
<div class="vl" style="left:480px;height:64px;background:#e3e3e3"></div><div class="vl" style="left:480px;top:64px;height:441px;background:#f0f0f0"></div><div class="vl" style="left:480px;top:505px;height:31px;background:#e6e6e6"></div>
<div class="vl" style="left:680px;height:64px;background:#e3e3e3"></div><div class="vl" style="left:680px;top:64px;height:441px;background:#f0f0f0"></div><div class="vl" style="left:680px;top:505px;height:31px;background:#e6e6e6"></div>
<div class="vl" style="left:880px;height:64px;background:#e3e3e3"></div><div class="vl" style="left:880px;top:64px;height:441px;background:#f0f0f0"></div><div class="vl" style="left:880px;top:505px;height:31px;background:#e6e6e6"></div>
<div class="vl" style="left:1020px;height:64px;background:#e3e3e3"></div><div class="vl" style="left:1020px;top:64px;height:441px;background:#f0f0f0"></div><div class="vl" style="left:1020px;top:505px;height:31px;background:#e6e6e6"></div>
<div class="vl" style="left:1180px;height:64px;background:#e3e3e3"></div><div class="vl" style="left:1180px;top:64px;height:441px;background:#f0f0f0"></div><div class="vl" style="left:1180px;top:505px;height:31px;background:#e6e6e6"></div>
<div class="vl" style="left:1340px;height:64px;background:#e3e3e3"></div><div class="vl" style="left:1340px;top:64px;height:441px;background:#f0f0f0"></div><div class="vl" style="left:1340px;top:505px;height:31px;background:#e6e6e6"></div>
<div class="vl" style="left:1500px;height:64px;background:#e3e3e3"></div><div class="vl" style="left:1500px;top:64px;height:441px;background:#f0f0f0"></div><div class="vl" style="left:1500px;top:505px;height:31px;background:#e6e6e6"></div>
<div class="cb" style="left:16px;top:6px"></div>
<div class="t b" style="left:70px;top:8px;letter-spacing:-0.25px">Mã tài sản</div>
<div class="t b" style="left:203px;width:58px;text-align:center;top:8px">STT</div>
<div class="t b" style="left:272px;top:8px;letter-spacing:-0.35px">Tên tài sản</div>
<div class="t b" style="left:497px;top:8px">Loại tài sản</div>
<div class="t b" style="left:697px;top:8px">Bộ phận sử dụng</div>
<div class="t b" style="right:536px;top:8px">Số lượng</div>
<div class="t b" style="right:376px;top:8px">Nguyên giá</div>
<div class="t b" style="right:216px;top:8px">Hao mòn lũy kế</div>
<div class="t b" style="right:56px;top:8px">Giá trị còn lại</div>
<div class="inp" style="left:70px;top:36px;width:123px"></div><div class="a" style="left:166px;top:36px;width:1px;height:25px;background:#d3d3d3"></div><svg class="a" style="left:169px;top:38px" width="22" height="22" viewBox="0 0 22 22"><path d="M6 7.2 Q11 5.2 16.6 6.8 L13.6 10.8 V18.5 L8.6 15.8 V10.8z" fill="#b5e1f3"/><path d="M2.6 3.9 H19.4 L13.6 10.6 V19 L8.6 16.2 V10.6 Z" fill="none" stroke="#1d1d1d" stroke-width="1.5" stroke-linejoin="round"/></svg>
<div class="inp" style="left:272px;top:36px;width:198px"></div><div class="a" style="left:443px;top:36px;width:1px;height:25px;background:#d3d3d3"></div><svg class="a" style="left:446px;top:38px" width="22" height="22" viewBox="0 0 22 22"><path d="M6 7.2 Q11 5.2 16.6 6.8 L13.6 10.8 V18.5 L8.6 15.8 V10.8z" fill="#b5e1f3"/><path d="M2.6 3.9 H19.4 L13.6 10.6 V19 L8.6 16.2 V10.6 Z" fill="none" stroke="#1d1d1d" stroke-width="1.5" stroke-linejoin="round"/></svg>
<div class="inp" style="left:497px;top:36px;width:173px"></div><div class="a" style="left:643px;top:36px;width:1px;height:25px;background:#d3d3d3"></div><svg class="a" style="left:646px;top:38px" width="22" height="22" viewBox="0 0 22 22"><path d="M6 7.2 Q11 5.2 16.6 6.8 L13.6 10.8 V18.5 L8.6 15.8 V10.8z" fill="#b5e1f3"/><path d="M2.6 3.9 H19.4 L13.6 10.6 V19 L8.6 16.2 V10.6 Z" fill="none" stroke="#1d1d1d" stroke-width="1.5" stroke-linejoin="round"/></svg><svg class="a" style="left:626px;top:46px" width="10" height="6" viewBox="0 0 10 6"><path d="M1 0.5h8L5 5.5z" fill="#111"/></svg>
<div class="inp" style="left:697px;top:36px;width:173px"></div><div class="a" style="left:843px;top:36px;width:1px;height:25px;background:#d3d3d3"></div><svg class="a" style="left:846px;top:38px" width="22" height="22" viewBox="0 0 22 22"><path d="M6 7.2 Q11 5.2 16.6 6.8 L13.6 10.8 V18.5 L8.6 15.8 V10.8z" fill="#b5e1f3"/><path d="M2.6 3.9 H19.4 L13.6 10.6 V19 L8.6 16.2 V10.6 Z" fill="none" stroke="#1d1d1d" stroke-width="1.5" stroke-linejoin="round"/></svg><svg class="a" style="left:826px;top:46px" width="10" height="6" viewBox="0 0 10 6"><path d="M1 0.5h8L5 5.5z" fill="#111"/></svg>
<div class="inp" style="left:897px;top:36px;width:113px"></div><div class="a" style="left:927px;top:36px;width:1px;height:25px;background:#d3d3d3"></div><div class="t" style="left:897px;width:30px;text-align:center;top:40px;font-size:12px">=</div><div class="inp" style="left:1037px;top:36px;width:133px"></div><div class="a" style="left:1067px;top:36px;width:1px;height:25px;background:#d3d3d3"></div><div class="t" style="left:1037px;width:30px;text-align:center;top:40px;font-size:12px">=</div><div class="inp" style="left:1197px;top:36px;width:133px"></div><div class="a" style="left:1227px;top:36px;width:1px;height:25px;background:#d3d3d3"></div><div class="t" style="left:1197px;width:30px;text-align:center;top:40px;font-size:12px">=</div><div class="inp" style="left:1357px;top:36px;width:133px"></div><div class="a" style="left:1387px;top:36px;width:1px;height:25px;background:#d3d3d3"></div><div class="t" style="left:1357px;width:30px;text-align:center;top:40px;font-size:12px">=</div>
<div class="inp" style="left:1517px;top:36px;width:60px"></div>
<div class="a" style="left:0;top:536px;width:1545px;height:31px;background:#f9fafc"></div>
<div class="hl" style="top:536px;width:1545px;background:#e0e0e0"></div>
<div class="t" style="left:16px;top:545px">Tổng số: <b>66</b> bản ghi</div>
<div class="a" style="left:1390px;top:540px;width:59px;height:25px;border:1px solid #c4c4c4;border-radius:4px;background:transparent"></div>
<div class="t" style="left:1399px;top:544px;font-size:12px;color:#333">20</div>
<svg class="a" style="left:1422px;top:548px" width="12" height="8" viewBox="0 0 12 8"><path d="M1.5 1.5 L6 6 L10.5 1.5" fill="none" stroke="#333" stroke-width="1.4"/></svg>
<svg class="a" style="left:1474px;top:547px" width="10" height="14" viewBox="0 0 10 14"><path d="M7.5 1.5 L2.5 7 L7.5 12.5" fill="none" stroke="#555" stroke-width="1.8"/></svg>
<svg class="a" style="left:1507px;top:547px" width="10" height="14" viewBox="0 0 10 14"><path d="M2.5 1.5 L7.5 7 L2.5 12.5" fill="none" stroke="#555" stroke-width="1.8"/></svg>
</div>
<div class="a" style="left:359px;top:664px;width:1545px;height:4px;background:#fff"></div>
<div class="a" style="left:359px;top:664px;width:1545px;height:1px;background:#aaacae"></div>
<div class="a" style="left:359px;top:667px;width:1545px;height:1px;background:#b2b3b4"></div>
<div class="a" style="left:359px;top:668px;width:1545px;height:158px;background:#fff">
<div class="a" style="left:8px;top:4px;width:126px;height:24px;background:#23a8d6;border-radius:3px"></div>
<div class="t" style="left:8px;width:126px;text-align:center;top:8px;color:#fff;font-weight:bold;letter-spacing:-0.5px">Thông tin chung</div>
<div class="a" style="left:142px;top:4px;width:132px;height:24px;background:#f2f3f4;border-radius:3px"></div>
<div class="t" style="left:142px;width:132px;text-align:center;top:8px;color:#333;font-weight:normal;letter-spacing:0">Thông tin kê khai</div>
<div class="a" style="left:282px;top:4px;width:136px;height:24px;background:#f2f3f4;border-radius:3px"></div>
<div class="t" style="left:282px;width:136px;text-align:center;top:8px;color:#333;font-weight:normal;letter-spacing:0">Lịch sử biến động</div>
<div class="a" style="left:426px;top:4px;width:111px;height:24px;background:#f2f3f4;border-radius:3px"></div>
<div class="t" style="left:426px;width:111px;text-align:center;top:8px;color:#333;font-weight:normal;letter-spacing:0">Tệp đính kèm</div>
<div class="a" style="left:1519px;top:8px;width:16px;height:16px;border-radius:50%;background:#e6e6e6"></div>
<svg class="a" style="left:1519px;top:8px" width="16" height="16" viewBox="0 0 16 16"><path d="M4.8 6.6 L8 9.6 L11.2 6.6" fill="none" stroke="#1ea5d0" stroke-width="1.8"/></svg>
<div class="a hd" style="left:0;top:33px;width:1545px;height:32px"></div>
<div class="hl" style="top:97px;width:1545px;background:#e9e9e9"></div>
<div class="vl" style="left:150px;top:33px;height:65px"></div>
<div class="vl" style="left:565px;top:33px;height:65px"></div>
<div class="vl" style="left:725px;top:33px;height:65px"></div>
<div class="vl" style="left:875px;top:33px;height:65px"></div>
<div class="vl" style="left:1035px;top:33px;height:65px"></div>
<div class="vl" style="left:1195px;top:33px;height:65px"></div>
<div class="vl" style="left:1395px;top:33px;height:65px"></div>
<div class="t b" style="left:16px;top:41px;letter-spacing:-0.25px">Mã tài sản</div>
<div class="t b" style="left:167px;top:41px;letter-spacing:-0.35px">Tên tài sản</div>
<div class="t" style="left:17.5px;top:74px;letter-spacing:-0.9px">OTO2</div>
<div class="t" style="left:167px;top:74px">ô tô 2</div>
<div class="t b" style="right:830px;top:41px">Nguyên giá</div>
<div class="t" style="right:830px;top:74px">15.000.000</div>
<div class="t b" style="right:680px;top:41px">HM/KH năm</div>
<div class="t" style="right:680px;top:74px">3.000.000</div>
<div class="t b" style="right:520px;top:41px">Hao mòn lũy kế</div>
<div class="t" style="right:520px;top:74px">3.000.000</div>
<div class="t b" style="right:360px;top:41px">Giá trị còn lại</div>
<div class="t" style="right:360px;top:74px">12.000.000</div>
<div class="t b" style="right:160px;top:41px">Năm đưa vào sử dụng</div>
<div class="t" style="right:160px;top:74px">2022</div>
<div class="t b" style="right:21px;top:41px">Số năm sử dụng</div>
<div class="t" style="right:10px;top:74px">5,00</div>
</div>
<svg class="a" style="left:0;top:0" width="1920" height="937" viewBox="1 1 1920 937">
<rect x="164.5" y="47.5" width="659" height="48" fill="none" stroke="#f73b3b" stroke-width="3"/>
<rect x="359.5" y="158.5" width="54" height="452" fill="none" stroke="#f73b3b" stroke-width="3"/>
<path d="M379 156.5 L358.6 105.5" stroke="#f73b3b" stroke-width="2.8"/>
<path d="M355.6 97 L355 106.2 L362.8 103.2 z" fill="#f73b3b" stroke="#f73b3b" stroke-width="1" stroke-linejoin="round"/>
<circle cx="357.8" cy="168.5" r="20.4" fill="#f80000"/>
<text x="0" y="0" transform="translate(357.8 178.4) scale(0.96 1)" text-anchor="middle" font-family="Liberation Sans" font-size="29" fill="#e2e2e2">5</text>
</svg>
</div></body></html>
